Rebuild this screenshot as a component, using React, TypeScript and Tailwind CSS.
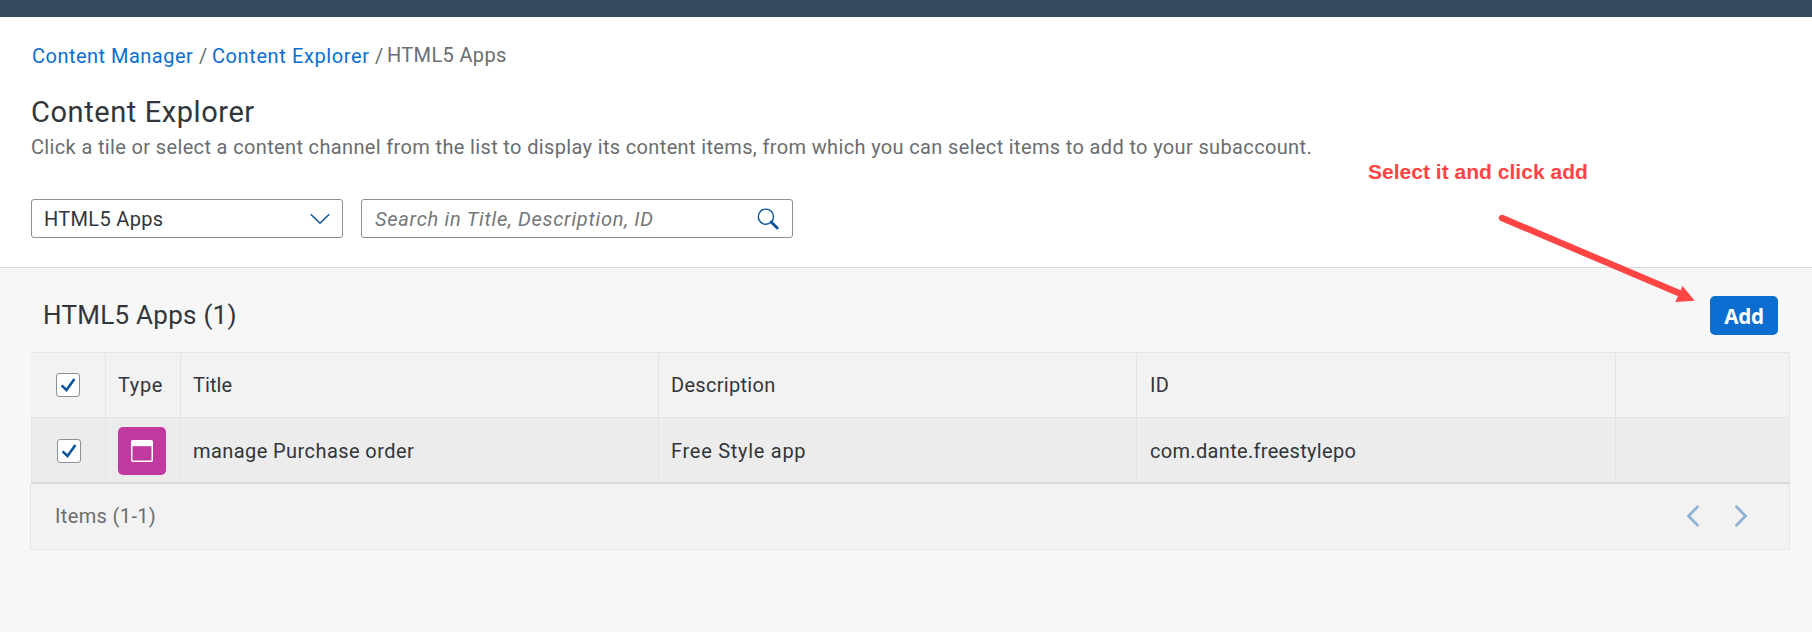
import type { ReactNode } from "react";

function Checkbox() {
  return (
    <span className="flex size-6 shrink-0 items-center justify-center rounded-[3px] border border-[#89919a] bg-white">
      <svg width="22" height="22" viewBox="0 0 22 22" fill="none" stroke="#0854a0" strokeWidth="2.5">
        <path d="M4.6 11.3 L9.5 16 L17.4 5" />
      </svg>
    </span>
  );
}

function Cell({ children, className = "" }: { children?: ReactNode; className?: string }) {
  return <div className={`flex items-center border-r border-[#e4e4e4] ${className}`}>{children}</div>;
}

export default function App() {
  return (
    <div className="relative flex h-[632px] w-[1812px] flex-col overflow-hidden bg-[#f7f7f7] font-[Roboto,sans-serif] text-[20px] leading-6 tracking-[0.36px] text-[#32363a]">
      <div className="h-[17px] shrink-0 bg-[#354a5f]" />

      <header className="h-[251px] shrink-0 border-b border-[#d9d9d9] bg-white pl-[31px] pt-[27px] shadow-[0_2px_3px_rgba(0,0,0,0.015)]">
        <nav className="flex text-[#6a6d70]">
          <a className="ml-px w-[167px] tracking-[0.48px] text-[#0a6ed1]">Content Manager</a>
          <span className="w-[13px]">/</span>
          <a className="w-[163px] tracking-[0.6px] text-[#0a6ed1]">Content Explorer</a>
          <span className="w-[12px]">/</span>
          <span className="-mt-px tracking-[0.35px]">HTML5 Apps</span>
        </nav>
        <h1 className="mt-[26px] text-[29px] leading-9 tracking-[0.58px]">Content Explorer</h1>
        <p className="mt-[5px] whitespace-nowrap text-[#6a6d70] tracking-[0.353px]">
          Click a tile or select a content channel from the list to display its content items, from which you can select
          items to add to your subaccount.
        </p>
        <div className="mt-10 flex gap-[18px]">
          <div className="flex h-[39px] w-[312px] items-center justify-between rounded-[3px] border border-[#89919a] bg-white pl-3 pr-3 pt-px">
            <span className="tracking-[0.32px]">HTML5 Apps</span>
            <svg width="20" height="12" viewBox="0 0 20 12" fill="none" stroke="#0854a0" strokeWidth="1.5">
              <path d="M0.8 1.2 L10 10.3 L19.2 1.2" />
            </svg>
          </div>
          <div className="flex h-[39px] w-[432px] items-center justify-between rounded-[3px] border border-[#89919a] bg-white pl-[13px] pr-[13px] pt-px">
            <span className="italic tracking-[0.72px] text-[#74777a]">Search in Title, Description, ID</span>
            <svg width="22" height="22" viewBox="0 0 22 22" fill="none" stroke="#0854a0">
              <circle cx="8.9" cy="8.7" r="7.6" strokeWidth="1.4" />
              <path d="M14.2 14 L20.2 20" strokeWidth="2.8" strokeLinecap="round" />
            </svg>
          </div>
        </div>
      </header>

      <main>
        <div className="flex h-[84px] items-start justify-between pl-[43px] pr-[34px] pt-7">
          <h2 className="mt-[3px] text-[26px] leading-8 tracking-[0.27px]">HTML5 Apps (1)</h2>
          <button className="h-[39px] w-[68px] rounded-[5px] bg-[#0a6ed1] pt-px font-['Noto_Sans',sans-serif] text-[20.5px] font-bold tracking-[-0.2px] text-white">
            Add
          </button>
        </div>

        <div className="ml-[31px] w-[1759px]">
          <div className="grid h-[65px] grid-cols-[75px_75px_478px_478px_479px_174px] border-t border-[#e4e4e4] bg-[#f2f2f2]">
            <Cell className="pl-[25px]"><Checkbox /></Cell>
            <Cell className="pl-3 tracking-[0.6px]">Type</Cell>
            <Cell className="pl-3 tracking-[0.05px]">Title</Cell>
            <Cell className="pl-3 tracking-[0.3px]">Description</Cell>
            <Cell className="pl-[13px]">ID</Cell>
            <Cell />
          </div>
          <div className="grid h-[65px] grid-cols-[75px_75px_478px_478px_479px_174px] border-t border-[#e4e4e4] bg-[#ececec]">
            <Cell className="border-l pl-[25px] pt-px"><Checkbox /></Cell>
            <Cell className="pl-3 pt-0.5">
              <span className="flex size-12 items-center justify-center rounded-[5px] bg-[#c0399f]">
                <svg width="22" height="22" viewBox="0 0 22 22" fill="none">
                  <rect x="0.75" y="0.75" width="20.5" height="20.5" rx="1" stroke="#fff" strokeWidth="1.5" />
                  <path d="M1 1 H21 V6.2 H1 Z" fill="#fff" />
                </svg>
              </span>
            </Cell>
            <Cell className="pl-3 pt-0.5 tracking-[0.42px]">manage Purchase order</Cell>
            <Cell className="pl-3 pt-0.5 tracking-[0.72px]">Free Style app</Cell>
            <Cell className="pl-[13px] pt-0.5 tracking-[0.32px]">com.dante.freestylepo</Cell>
            <Cell />
          </div>
          <div className="h-0.5 bg-[#d9d9d9]" />
          <footer className="-ml-px flex h-[66px] items-center justify-between border border-t-0 border-[#e4e4e4] bg-[#f2f2f2] pb-px pl-6 pr-[41px] text-[#6a6d70]">
            <span>Items (1-1)</span>
            <span className="flex gap-[34px]">
              <svg width="14" height="22" viewBox="0 0 14 22" fill="none" stroke="#91b2d5" strokeWidth="2.8" strokeLinecap="round">
                <path d="M11.5 1.7 L2.5 11 L11.5 20.3" />
              </svg>
              <svg width="14" height="22" viewBox="0 0 14 22" fill="none" stroke="#91b2d5" strokeWidth="2.8" strokeLinecap="round">
                <path d="M2.5 1.7 L11.5 11 L2.5 20.3" />
              </svg>
            </span>
          </footer>
        </div>
      </main>

      <div className="absolute left-[1368px] top-[160px] whitespace-nowrap font-['Liberation_Sans',sans-serif] text-[21px] font-bold tracking-[0.02px] text-[#ff4444]">
        Select it and click add
      </div>
      <svg className="absolute left-[1490px] top-[205px]" width="210" height="105" viewBox="0 0 210 105">
        <path d="M12 13 L190 88.5" stroke="#ff4444" strokeWidth="6.5" strokeLinecap="round" />
        <path d="M192.500 81 L204.700 95.700 L185.300 97 Z" fill="#ff4444" />
      </svg>
    </div>
  );
}
